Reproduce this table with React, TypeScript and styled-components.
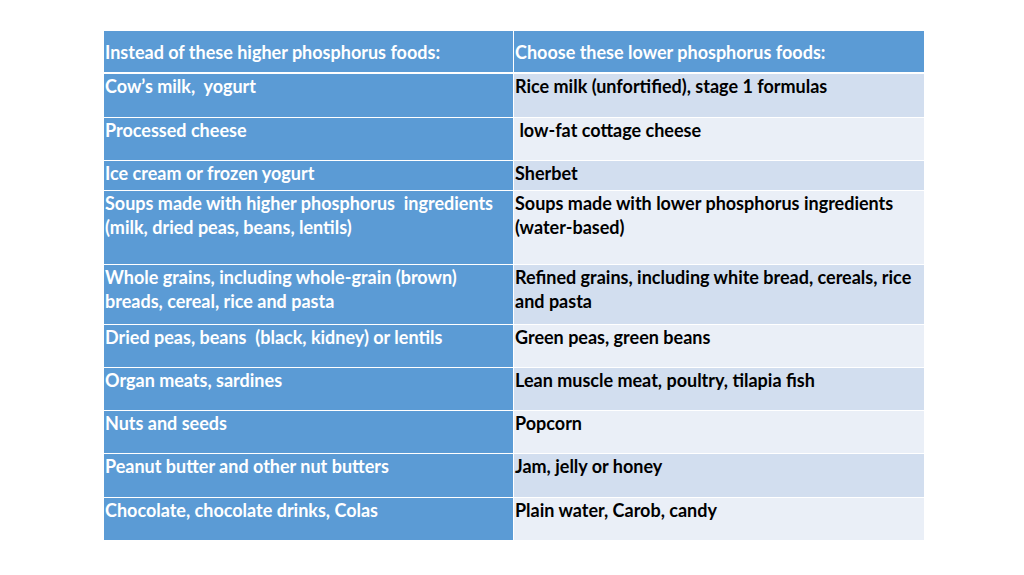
import styled, { createGlobalStyle } from "styled-components";

const GlobalStyle = createGlobalStyle`
  html, body {
    margin: 0;
    padding: 0;
    background: #ffffff;
  }
`;

interface Row {
  higher: string;
  lower: string;
  height: number;
}

const rows: Row[] = [
  { higher: "Cow’s milk,  yogurt", lower: "Rice milk (unfortified), stage 1 formulas", height: 43 },
  { higher: "Processed cheese", lower: " low-fat cottage cheese", height: 43 },
  { higher: "Ice cream or frozen yogurt", lower: "Sherbet", height: 30 },
  {
    higher: "Soups made with higher phosphorus  ingredients (milk, dried peas, beans, lentils)",
    lower: "Soups made with lower phosphorus ingredients (water-based)",
    height: 74,
  },
  {
    higher: "Whole grains, including whole-grain (brown) breads, cereal, rice and pasta",
    lower: "Refined grains, including white bread, cereals, rice and pasta",
    height: 60,
  },
  { higher: "Dried peas, beans  (black, kidney) or lentils", lower: "Green peas, green beans", height: 43 },
  { higher: "Organ meats, sardines", lower: "Lean muscle meat, poultry, tilapia fish", height: 43 },
  { higher: "Nuts and seeds", lower: "Popcorn", height: 43 },
  { higher: "Peanut butter and other nut butters", lower: "Jam, jelly or honey", height: 44 },
  { higher: "Chocolate, chocolate drinks, Colas", lower: "Plain water, Carob, candy", height: 43 },
];

const Slide = styled.div`
  width: 1024px;
  height: 575px;
  padding-top: 31px;
  box-sizing: border-box;
  display: flex;
  justify-content: center;
  font-family: Lato, "Liberation Sans", sans-serif;
`;

const Table = styled.div`
  width: 820px;
  margin-left: 4px;
  display: grid;
  grid-template-columns: 409px 410px;
  column-gap: 1px;
  background: #ffffff;
  align-self: flex-start;
`;

const HeaderCell = styled.div`
  height: 43px;
  background: #5b9bd5;
  color: #ffffff;
  font-weight: 700;
  font-size: 18px;
  display: flex;
  align-items: center;
  padding: 1px 1px 0;
  box-sizing: border-box;
  border-bottom: 2px solid #ffffff;
`;

const Cell = styled.div<{ $h: number; $band: boolean; $first: boolean }>`
  height: ${(p) => p.$h}px;
  box-sizing: border-box;
  border-top: ${(p) => (p.$first ? "none" : "1px solid #ffffff")};
  padding: 0 1px;
  font-size: 18px;
  line-height: 24px;
  font-weight: 700;
  white-space: pre-wrap;
`;

const HigherCell = styled(Cell)`
  background: #5b9bd5;
  color: #ffffff;
`;

const LowerCell = styled(Cell)`
  background: ${(p) => (p.$band ? "#d2deef" : "#eaeff7")};
  color: #000000;
`;

export default function App() {
  return (
    <>
      <GlobalStyle />
      <Slide>
        <Table>
          <HeaderCell>Instead of these higher phosphorus foods:</HeaderCell>
          <HeaderCell>Choose these lower phosphorus foods:</HeaderCell>
          {rows.map((row, i) => [
            <HigherCell key={`h${i}`} $h={row.height} $band={i % 2 === 0} $first={i === 0}>
              {row.higher}
            </HigherCell>,
            <LowerCell key={`l${i}`} $h={row.height} $band={i % 2 === 0} $first={i === 0}>
              {row.lower}
            </LowerCell>,
          ])}
        </Table>
      </Slide>
    </>
  );
}
